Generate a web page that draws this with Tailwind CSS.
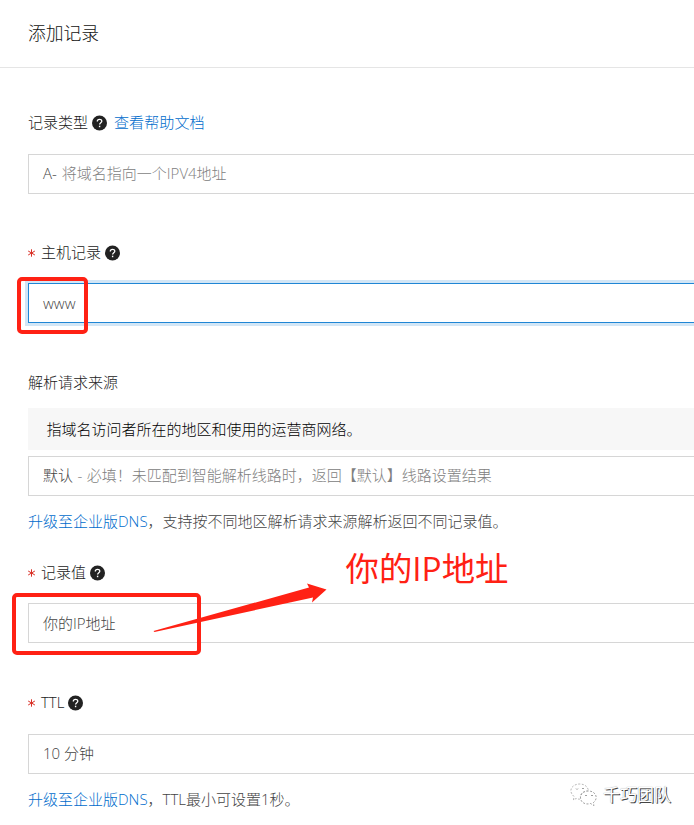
<!DOCTYPE html>
<html lang="zh-CN">
<head>
<meta charset="utf-8">
<title>添加记录</title>
<script src="https://cdn.jsdelivr.net/npm/@tailwindcss/browser@4"></script>
</head>
<body class="relative h-[825px] w-[694px] overflow-hidden bg-white font-['Open_Sans','Noto_Sans_CJK_SC',sans-serif] text-[15px] leading-[30px] font-light text-[#222] whitespace-nowrap">
<svg class="hidden">
  <symbol id="help" viewBox="0 0 16 16">
    <circle cx="7.5" cy="8" r="7.5" fill="#222"/>
    <path d="M5.3 6.4C5.3 3.6 9.9 3.7 9.8 6.3C9.7 7.8 7.6 7.8 7.6 9.6" fill="none" stroke="#fff" stroke-width="1.3"/>
    <rect x="6.9" y="10.7" width="1.4" height="1.5" fill="#fff"/>
  </symbol>
  <symbol id="star" viewBox="0 0 8 8">
    <path d="M3.5 .3V7.7M.2 2L6.9 6M6.9 2L.2 6" stroke="#d93026" stroke-width="1"/>
  </symbol>
</svg>
<header class="flex h-[68px] items-center border-b border-[#e5e5e5] pb-0.5 pl-7 text-[17.8px] text-[#111]">添加记录</header>
<main class="flex flex-col pt-[40px] pl-7">
  <div class="flex h-[30px] items-center pb-0.5">记录类型<svg class="mt-px ml-[4px] size-4"><use href="#help"/></svg><a class="ml-[6px] text-[15.1px] text-[#006ccc]">查看帮助文档</a></div>
  <div class="mt-4 flex h-10 items-center border border-r-0 border-[#d6d6d6] pb-0.5 pl-[14px] text-[#808080]"><span class="mr-[5px] text-[#444]">A-</span>将域名指向一个IPV4地址</div>

  <div class="mt-[44px] flex h-[30px] items-center pb-0.5"><svg class="mt-0.5 mr-[5px] size-2"><use href="#star"/></svg>主机记录<svg class="mt-px ml-[4px] size-4"><use href="#help"/></svg></div>
  <div class="mt-[15px] flex h-10 items-center border border-r-0 border-[#1f86d5] pl-[14px] text-[#444] shadow-[0_0_0_3px_#d2e6f6]">www</div>

  <div class="mt-[44px] h-[30px]">解析请求来源</div>
  <div class="mt-[11px] flex h-[42px] items-center bg-[#f7f7f7] pl-[18.5px] text-[#000]">指域名访问者所在的地区和使用的运营商网络。</div>
  <div class="mt-1.5 flex h-10 items-center border border-r-0 border-[#d6d6d6] pb-0.5 pl-[14px] text-[#808080]"><span class="mr-[4.5px] text-[#444]">默认</span><span class="mr-[4.5px]">-</span>必填！未匹配到智能解析线路时，返回【默认】线路设置结果</div>
  <div class="mt-[10px] h-[30px] text-[#444]"><a class="text-[#006ccc]">升级至企业版DNS</a>，支持按不同地区解析请求来源解析返回不同记录值。</div>

  <div class="mt-[22px] flex h-[30px] items-center pb-0.5"><svg class="mt-0.5 mr-[5px] size-2"><use href="#star"/></svg>记录值<svg class="mt-px ml-[4px] size-4"><use href="#help"/></svg></div>
  <div class="mt-[15px] flex h-10 items-center border border-r-0 border-[#d6d6d6] pl-[14px] text-[#444]">你的IP地址</div>

  <div class="mt-[45px] flex h-[30px] items-center pb-0.5"><svg class="mt-0.5 mr-[5px] size-2"><use href="#star"/></svg>TTL<svg class="mt-px ml-[4px] size-4"><use href="#help"/></svg></div>
  <div class="mt-4 flex h-10 items-center border border-r-0 border-[#d6d6d6] pb-0.5 pl-[14px] text-[#444]">10 分钟</div>
  <div class="mt-[10px] h-[30px] text-[#444]"><a class="text-[#006ccc]">升级至企业版DNS</a>，TTL最小可设置1秒。</div>
</main>

<div class="absolute top-[276.5px] left-[17px] h-[57px] w-[71px] rounded-[5px] border-4 border-[#ff2114]"></div>
<div class="absolute top-[592.5px] left-[12px] h-[62px] w-[189px] rounded-[5px] border-4 border-[#ff2114]"></div>
<svg class="absolute top-[570px] left-[150px] h-[70px] w-[190px]" viewBox="150 570 190 70"><path d="M153.5 631L309 587.5L307 583.5L326.500 589.5L312 602.5L313 597.5L154.5 632Z" fill="#ff2114"/></svg>
<div class="absolute top-[546px] left-[345.5px] text-[33.4px] leading-[44px] font-normal text-[#ff2114]">你的IP地址</div>

<div class="absolute top-[780px] left-[570px] flex h-[30px] items-center pb-px">
  <svg class="h-[24px] w-[28px]" viewBox="0 0 28 24" fill="#fff" stroke="#999" stroke-width=".7" stroke-dasharray="2 1.5">
    <path d="M3.5 17L4 13.5C-3 7 3 1 9.5 1C15 1 18 4 18.5 8C12 8 9 12 11 16C8 16.5 7 15.5 6 15.5Z"/>
    <path d="M18.5 8C13 8 10.5 11.5 10.5 14.5C10.5 20 16 22 20.5 20.5L24 22.5L23.5 19.5C29 15 25.5 8 18.5 8Z" stroke="#777"/>
    <path d="M6 5.5L7 6.5L8 5.5M12 5.5H14M15 12.5H17M21 12.5H23" stroke-dasharray="none" stroke="#777"/>
  </svg>
  <span class="ml-[5px] text-[17px] font-normal text-white [text-shadow:1px_1px_0_#444,0_0_1px_#888]">千巧团队</span>
</div>
</body>
</html>
